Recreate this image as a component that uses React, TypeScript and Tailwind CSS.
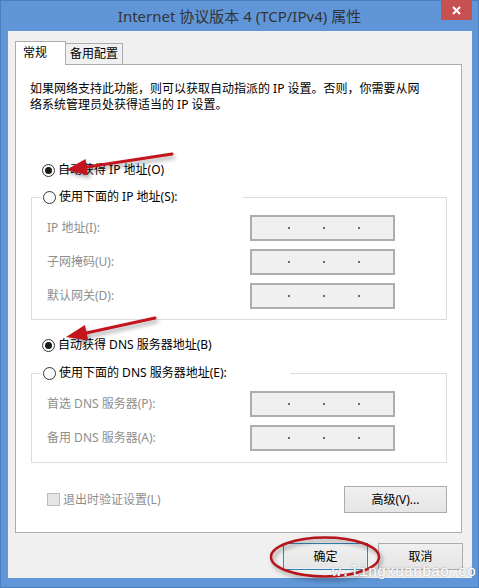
const font = { fontFamily: '"Noto Sans", "Noto Sans CJK SC", sans-serif' };

const Radio = ({ checked }: { checked?: boolean }) => (
  <span className="flex h-[13px] w-[13px] shrink-0 items-center justify-center rounded-full border border-[#333333] bg-white">
    {checked && <span className="h-[7px] w-[7px] rounded-full bg-[#1a1a1a]" />}
  </span>
);

const IpBox = () => (
  <div className="flex h-[26px] w-[145px] items-center gap-[33px] border-2 border-[#adadad] bg-[#f0f0f0] pl-[36px]">
    <span className="h-[2px] w-[2px] bg-[#6d6d6d]" />
    <span className="h-[2px] w-[2px] bg-[#6d6d6d]" />
    <span className="h-[2px] w-[2px] bg-[#6d6d6d]" />
  </div>
);

const FieldRow = ({ label }: { label: string }) => (
  <div className="flex items-center">
    <span className="w-[218px] pl-[15px] text-[12px] text-[#8e8e8e]">{label}</span>
    <IpBox />
  </div>
);

const Group = ({
  legend,
  legendWidth,
  labels,
  pb,
}: {
  legend: string;
  legendWidth: string;
  labels: string[];
  pb: string;
}) => (
  <fieldset className={`mr-[14px] ml-[15px] border border-[#dcdcdc] ${pb}`}>
    <legend className={`ml-[9px] flex h-[16px] items-center gap-[3px] pl-[2px] ${legendWidth}`}>
      <Radio />
      <span className="text-[12px] leading-[16px] text-black">{legend}</span>
    </legend>
    <div className="mt-[10px] flex flex-col gap-[8px]">
      {labels.map((l) => (
        <FieldRow key={l} label={l} />
      ))}
    </div>
  </fieldset>
);

const Button = ({ children, primary, w }: { children: string; primary?: boolean; w: string }) => (
  <div
    className={`flex h-[27px] ${w} items-center justify-center border bg-gradient-to-b from-[#f0f0f0] to-[#e5e5e5] text-[12px] text-black ${
      primary ? 'border-[#3c7fb1] ring-1 ring-inset ring-[#e5f1fb]' : 'border-[#acacac]'
    }`}
  >
    {children}
  </div>
);

export default function App() {
  return (
    <div className="relative flex h-[588px] w-[479px] flex-col border border-[#4a7dc0] bg-[#6096d8]" style={font}>
      <div className="grid h-[30px] shrink-0 grid-cols-[1fr_auto_1fr]">
        <div />
        <div className="pt-[4px] text-[15px] leading-[22px] text-[#333333]">Internet 协议版本 4 (TCP/IPv4) 属性</div>
        <div className="flex justify-end pr-[6px]">
          <div className="-mt-px flex h-[20px] w-[31px] items-center justify-center bg-[#c75050]">
            <svg width="9" height="9" viewBox="0 0 9 9">
              <path d="M1 1L8 8M8 1L1 8" stroke="white" strokeWidth="2" />
            </svg>
          </div>
        </div>
      </div>

      <div className="mr-[6px] mb-[9px] ml-[7px] flex flex-1 flex-col bg-[#f0f0f0] pt-[9px] pr-[9px] pl-[7px]">
        <div className="flex h-[24px] items-end">
          <div className="relative z-10 -mb-px flex h-[24px] w-[51px] items-start border border-b-0 border-[#acacac] bg-white pt-[2px] pl-[7px] text-[12px]">
            常规
          </div>
          <div className="flex h-[21px] w-[57px] items-center justify-center border border-b-0 border-l-0 border-[#acacac] bg-[#f0f0f0] text-[12px]">
            备用配置
          </div>
        </div>

        <div className="flex h-[469px] w-[447px] flex-col border border-[#acacac] bg-white">
          <p className="mt-[16px] pl-[14px] text-[12px] leading-[16px] text-black">
            如果网络支持此功能，则可以获取自动指派的 IP 设置。否则，你需要从网
            <br />
            络系统管理员处获得适当的 IP 设置。
          </p>

          <div className="mt-[49px] ml-[26px] flex h-[16px] items-center gap-[3px]">
            <Radio checked />
            <span className="text-[12px] text-black">自动获得 IP 地址(O)</span>
          </div>

          <div className="mt-[11px]">
            <Group
              legend="使用下面的 IP 地址(S):"
              legendWidth="w-[202px]"
              labels={['IP 地址(I):', '子网掩码(U):', '默认网关(D):']}
              pb="pb-[10px]"
            />
          </div>

          <div className="mt-[17px] ml-[26px] flex h-[16px] items-center gap-[3px]">
            <Radio checked />
            <span className="text-[12px] text-black">自动获得 DNS 服务器地址(B)</span>
          </div>

          <div className="mt-[12px]">
            <Group
              legend="使用下面的 DNS 服务器地址(E):"
              legendWidth="w-[249px]"
              labels={['首选 DNS 服务器(P):', '备用 DNS 服务器(A):']}
              pb="pb-[11px]"
            />
          </div>

          <div className="mt-[23px] mr-[14px] ml-[31px] flex items-center justify-between">
            <div className="flex items-center gap-[3px]">
              <span className="h-[13px] w-[13px] border border-[#bcbcbc] bg-[#e6e6e6]" />
              <span className="text-[12px] text-[#8e8e8e]">退出时验证设置(L)</span>
            </div>
            <Button w="w-[103px]">高级(V)...</Button>
          </div>
        </div>

        <div className="mt-[10px] flex justify-end gap-[10px]">
          <Button primary w="w-[85px]">
            确定
          </Button>
          <Button w="w-[85px]">取消</Button>
        </div>
      </div>

      <svg className="pointer-events-none absolute -top-px -left-px" width="479" height="588" viewBox="0 0 479 588">
        <defs>
          <filter id="sh" x="-20%" y="-50%" width="140%" height="200%">
            <feDropShadow dx="2" dy="3" stdDeviation="2" floodColor="#000" floodOpacity="0.35" />
          </filter>
        </defs>
        <g filter="url(#sh)" fill="#c3161c" stroke="#c3161c">
          <line x1="172" y1="154" x2="84" y2="167.5" strokeWidth="3" strokeLinecap="round" />
          <polygon points="66,170 88,175 85.5,159" stroke="none" />
          <line x1="155" y1="318" x2="84" y2="333.5" strokeWidth="3" strokeLinecap="round" />
          <polygon points="66,337 88.3,340.6 84.9,325" stroke="none" />
          <ellipse cx="325" cy="557" rx="54" ry="19.5" fill="none" strokeWidth="2.5" stroke="#b5121b" />
        </g>
      </svg>

      <div
        className="pointer-events-none absolute top-[564px] left-[331px] text-[15px] leading-[16px] whitespace-nowrap text-white [text-shadow:0_0_2px_rgba(120,120,120,0.8)]"
        style={{ fontFamily: '"Liberation Mono", monospace' }}
      >
        w.lingxuanbao.co
      </div>
    </div>
  );
}
